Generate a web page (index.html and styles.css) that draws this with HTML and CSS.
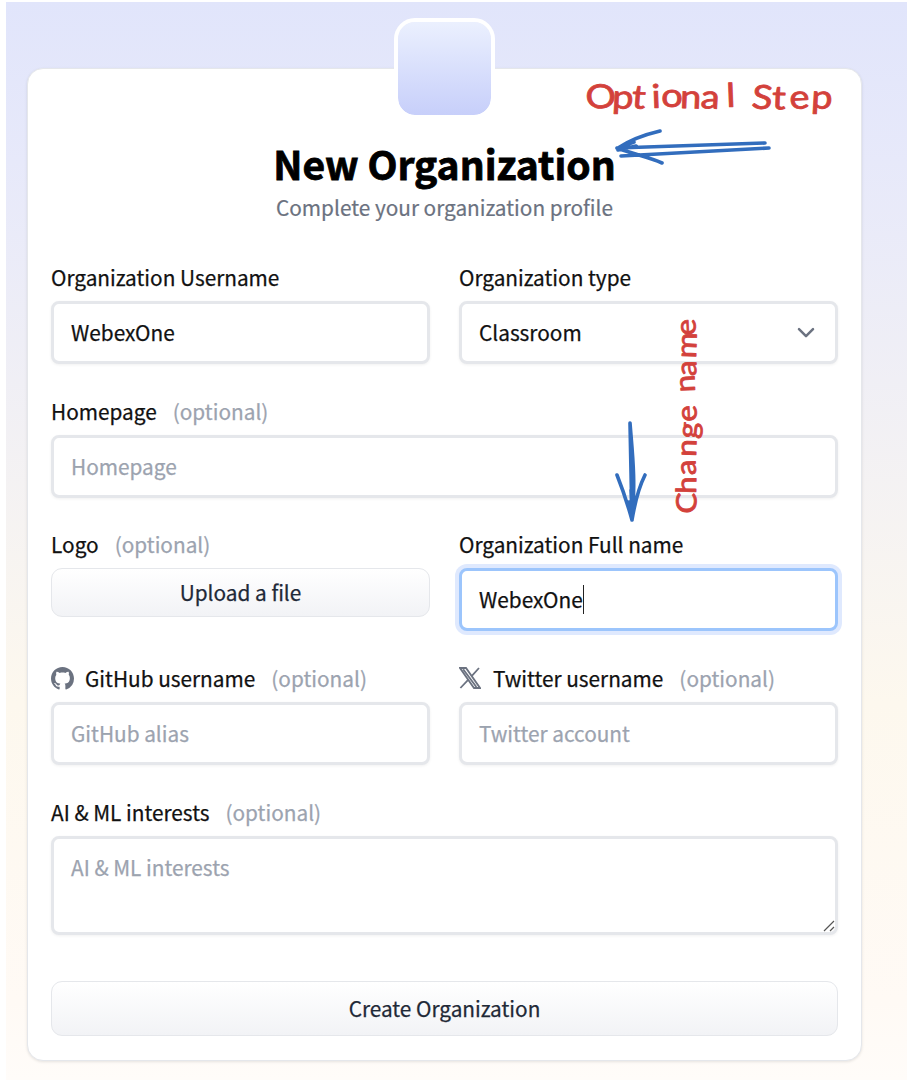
FILE: index.html
```html
<!DOCTYPE html>
<html lang="en">
<head>
<meta charset="utf-8">
<title>New Organization</title>
<link rel="stylesheet" href="styles.css">
</head>
<body>
<main class="page">
  <form class="card">
    <div class="avatar"></div>
    <h1 class="title">New Organization</h1>
    <p class="subtitle">Complete your organization profile</p>
    <div class="grid">
      <div class="field">
        <div class="label"><span>Organization Username</span></div>
        <div class="input">WebexOne</div>
      </div>
      <div class="field">
        <div class="label"><span>Organization type</span></div>
        <div class="input select">Classroom
          <svg class="chevron" viewBox="0 0 18 12"><path d="M2 2.2 9 9.2 16 2.2"/></svg>
        </div>
      </div>
      <div class="field wide">
        <div class="label"><span>Homepage</span><span class="optional">(optional)</span></div>
        <div class="input placeholder">Homepage</div>
      </div>
      <div class="field">
        <div class="label"><span>Logo</span><span class="optional">(optional)</span></div>
        <div class="button upload">Upload a file</div>
      </div>
      <div class="field">
        <div class="label"><span>Organization Full name</span></div>
        <div class="input focused">WebexOne<i class="caret"></i></div>
      </div>
      <div class="field">
        <div class="label">
          <svg class="icon github" viewBox="0 0 16 16"><path d="M8 0C3.58 0 0 3.58 0 8c0 3.54 2.29 6.53 5.47 7.59.4.07.55-.17.55-.38 0-.19-.01-.82-.01-1.49-2.01.37-2.53-.49-2.69-.94-.09-.23-.48-.94-.82-1.13-.28-.15-.68-.52-.01-.53.63-.01 1.08.58 1.23.82.72 1.21 1.87.87 2.33.66.07-.52.28-.87.51-1.07-1.78-.2-3.64-.89-3.64-3.95 0-.87.31-1.59.82-2.15-.08-.2-.36-1.02.08-2.12 0 0 .67-.21 2.2.82.64-.18 1.32-.27 2-.27s1.36.09 2 .27c1.53-1.04 2.2-.82 2.2-.82.44 1.1.16 1.92.08 2.12.51.56.82 1.27.82 2.15 0 3.07-1.87 3.75-3.65 3.95.29.25.54.73.54 1.48 0 1.07-.01 1.93-.01 2.2 0 .21.15.46.55.38A8.01 8.01 0 0 0 16 8c0-4.42-3.58-8-8-8z"/></svg>
          <span>GitHub username</span><span class="optional">(optional)</span>
        </div>
        <div class="input placeholder">GitHub alias</div>
      </div>
      <div class="field">
        <div class="label">
          <svg class="icon x" viewBox="0 0 22 22"><path d="M1 1H7L21 21H15ZM4.2 2.2 17.4 20M20 1 12.2 9.6M9.6 12.4 1.4 21"/></svg>
          <span>Twitter username</span><span class="optional">(optional)</span>
        </div>
        <div class="input placeholder">Twitter account</div>
      </div>
      <div class="field wide">
        <div class="label"><span>AI &amp; ML interests</span><span class="optional">(optional)</span></div>
        <div class="input placeholder area">AI &amp; ML interests
          <svg class="grip" viewBox="0 0 12 12"><path d="M1 11 11 1M7 11 11 7"/></svg>
        </div>
      </div>
    </div>
    <div class="button submit">Create Organization</div>
  </form>
  <svg class="notes" viewBox="0 0 916 1080">
    <g class="arrow">
      <path d="M617 148 765 143M621 156 769 148M618 148C630 140 643 135 660 131M617 148C633 154 648 157 662 163M618 150 636 146M620 147 634 142"/>
      <path d="M630 423 632 520M630 423C632 450 636 480 632 520M617 475C623 490 627 502 632 520M645 475C638 489 635 502 632 520M631 490 632 514M629 502 632 516"/>
    </g>
    <g transform="scale(1.15 1)">
      <text class="ink" x="510 532 549 567 575 591 609 632" y="109 108 108 108 107 108 108 107" rotate="-4 3 4 -2 0 2 3 -2">Optional</text>
      <text class="ink" x="653 671 687 705" y="108 109 109 108" rotate="5 2 -3 3">Step</text>
    </g>
    <g transform="translate(696 513) rotate(-90) scale(1.12 1)">
      <text class="ink small" x="-1 17 34 50 66 82" y="0 0 0 0 1 1" rotate="2 1 -2 2 4 -3">Change</text>
      <text class="ink small" x="108 122 138 159" y="-1 0 0 0" rotate="-2 2 2 -3">name</text>
    </g>
  </svg>
</main>
</body>
</html>
```
FILE: styles.css
```css
* { box-sizing: border-box; }
body {
  margin: 0;
  background: #fff;
  font-family: "Noto Sans CJK SC", "Noto Sans", sans-serif;
  font-size: 20.8px;
  color: #111;
}
.page {
  height: 1078px;
  margin: 2px 9px 0 6px;
  padding: 66px 45px 0 21px;
  background: linear-gradient(#e1e5fb 0, #e7e9fa 160px, #fdf8ee 700px, #fffaf5 1000px, #fffcf9 1078px);
}
.card {
  height: 993px;
  padding: 0 23px;
  display: flex;
  flex-direction: column;
  align-items: stretch;
  background: #fff;
  border: 1px solid #e5e7eb;
  border-radius: 16px;
  box-shadow: 0 1px 3px rgba(0,0,0,.1);
}
.avatar {
  width: 101px;
  height: 101px;
  margin: -51px auto 0;
  flex: none;
  border: 4px solid #fff;
  border-radius: 21px;
  background: linear-gradient(#ebf0fe, #c7cffa) padding-box;
}
.title {
  margin: 19px 0 0;
  height: 50px;
  line-height: 50px;
  font-size: 39px;
  font-weight: 700;
  text-align: center;
  color: #000;
  -webkit-text-stroke: .8px #000;
}
.subtitle {
  margin: 4px 0 0;
  height: 30px;
  line-height: 30px;
  text-align: center;
  color: #6b7280;
  -webkit-text-stroke: .2px;
}
.grid {
  flex: none;
  margin-top: 40px;
  display: grid;
  grid-template-columns: 1fr 1fr;
  grid-template-rows: repeat(4, 133.7px) 137px;
  column-gap: 29px;
  -webkit-text-stroke: .25px;
}
.wide { grid-column: 1 / -1; }
.label {
  height: 30px;
  margin-bottom: 9px;
  display: flex;
  align-items: center;
  line-height: 30px;
  white-space: nowrap;
}
.optional { margin-left: 16px; color: #9ca3af; }
.icon { width: 23px; height: 23px; margin-right: 11px; }
.github { fill: #6b7280; }
.x { width: 22px; height: 22px; margin-right: 12px; fill: none; stroke: #6b7280; stroke-width: 1.8; }
.input {
  position: relative;
  height: 63px;
  padding: 0 17px 1px;
  display: flex;
  align-items: center;
  line-height: 30px;
  border: 3px solid #e5e7eb;
  border-radius: 8px;
  background: #fff;
  box-shadow: 0 1px 3px rgba(0,0,0,.06);
}
.placeholder { color: #9ca3af; }
.select { justify-content: space-between; }
.chevron { width: 18px; height: 12px; margin: 2px 3px 0 0; fill: none; stroke: #6b7280; stroke-width: 2.5; stroke-linecap: round; stroke-linejoin: round; }
.focused { border-color: #9cc5fc; box-shadow: 0 0 0 4px #dfe9fe; }
.caret { width: 1.5px; height: 29px; background: #222; }
.area { height: 99px; align-items: flex-start; padding-top: 13px; }
.grip { position: absolute; right: 0; bottom: 0; width: 12px; height: 12px; fill: none; stroke: #555; stroke-width: 1.2; }
.button {
  display: flex;
  align-items: center;
  justify-content: center;
  padding-bottom: 1px;
  border: 1px solid #e5e7eb;
  border-radius: 11px;
  background: linear-gradient(#fff, #f2f3f6);
  color: #1f2937;
  -webkit-text-stroke: .25px;
}
.upload { height: 49px; }
.submit { height: 55px; flex: none; margin-top: 47px; }
.notes { position: absolute; left: 0; top: 0; width: 916px; height: 1080px; pointer-events: none; }
.arrow { fill: none; stroke: #326dbd; stroke-width: 3.6; stroke-linecap: round; stroke-linejoin: round; }
.ink { font-family: Lato, sans-serif; font-size: 33px; fill: #d3413b; stroke: #d3413b; stroke-width: .8; stroke-linejoin: round; }
.small { font-size: 28px; }
```
